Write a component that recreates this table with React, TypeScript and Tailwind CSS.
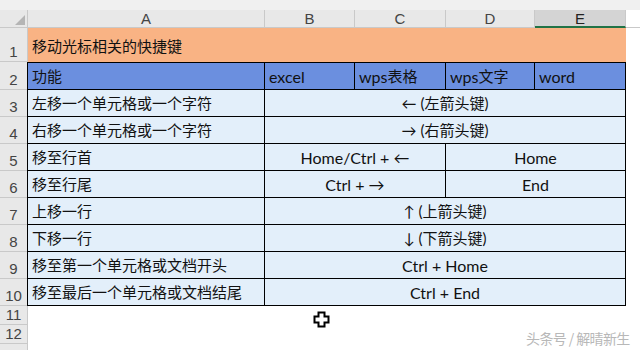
import React from "react";

const CJK = '"Lato", "Noto Sans CJK SC", sans-serif';

function RowHead({ n, h }: { n: number | string; h: string }) {
  return (
    <div
      className={`w-[28px] shrink-0 ${h} bg-[#e8e8e8] border-b border-r border-[#c9c9c9] flex items-end justify-center text-[15px] leading-none text-[#444] pb-[2px]`}
      style={{ fontFamily: '"Liberation Sans", sans-serif' }}
    >
      {n}
    </div>
  );
}

function Cell({
  w,
  children,
  center,
}: {
  w: string;
  children?: React.ReactNode;
  center?: boolean;
}) {
  return (
    <div
      className={`${w} shrink-0 h-full border-r border-b border-black flex items-center pt-[1px] ${
        center ? "justify-center" : "pl-[4px]"
      }`}
    >
      {children}
    </div>
  );
}

const L = ({ children }: { children: React.ReactNode }) => (
  <span className="text-[16px]">{children}</span>
);

type Row = { label: string; full?: React.ReactNode; left?: React.ReactNode; right?: React.ReactNode };

const rows: Row[] = [
  { label: "左移一个单元格或一个字符", full: <span>← (左箭头键)</span> },
  { label: "右移一个单元格或一个字符", full: <span>→ (右箭头键)</span> },
  { label: "移至行首", left: <L>Home/Ctrl + ←</L>, right: <L>Home</L> },
  { label: "移至行尾", left: <L>Ctrl + →</L>, right: <L>End</L> },
  { label: "上移一行", full: <span>↑ (上箭头键)</span> },
  { label: "下移一行", full: <span>↓ (下箭头键)</span> },
  { label: "移至第一个单元格或文档开头", full: <L>Ctrl + Home</L> },
  { label: "移至最后一个单元格或文档结尾", full: <L>Ctrl + End</L> },
];

export default function App() {
  return (
    <div
      className="relative w-[640px] h-[350px] overflow-hidden bg-white text-[15px] text-[#111]"
      style={{ fontFamily: CJK }}
    >
      {/* top strip */}
      <div className="h-[10px] bg-[#f0f0f0]" />
      {/* column header */}
      <div
        className="flex h-[18px] bg-[#e8e8e8] border-b border-[#c9c9c9] text-[15px] leading-none text-[#444]"
        style={{ fontFamily: '"Liberation Sans", sans-serif' }}
      >
        <div className="w-[28px] shrink-0 relative border-r border-[#c9c9c9]">
          <svg width="28" height="18" className="absolute left-0 top-0">
            <polygon points="15,15 25,15 25,5" fill="#b5b5b5" />
          </svg>
        </div>
        <div className="w-[237px] shrink-0 border-r border-[#c9c9c9] flex items-center justify-center">A</div>
        <div className="w-[90px] shrink-0 border-r border-[#c9c9c9] flex items-center justify-center">B</div>
        <div className="w-[91px] shrink-0 border-r border-[#c9c9c9] flex items-center justify-center">C</div>
        <div className="w-[89px] shrink-0 border-r border-[#c9c9c9] flex items-center justify-center">D</div>
        <div className="w-[91px] shrink-0 bg-[#d4d4d4] border-r border-[#c9c9c9] border-b-2 border-b-[#217346] -mb-[1px] flex items-center justify-center text-[#222]">E</div>
        <div className="flex-1 bg-white" />
      </div>

      {/* row 1 */}
      <div className="flex h-[34px]">
        <RowHead n={1} h="h-[34px]" />
        <div className="w-[598px] shrink-0 h-full bg-[#f9b384] flex items-center pl-[4px] pt-[2px]">
          移动光标相关的快捷键
        </div>
      </div>

      {/* row 2 */}
      <div className="flex h-[28px]">
        <RowHead n={2} h="h-[28px]" />
        <div className="flex h-full bg-[#6b8fdf] border-t border-l border-black -ml-[1px]">
          <Cell w="w-[237px]">功能</Cell>
          <Cell w="w-[90px]"><L>excel</L></Cell>
          <Cell w="w-[91px]"><L>wps</L>表格</Cell>
          <Cell w="w-[89px]"><L>wps</L>文字</Cell>
          <Cell w="w-[91px]"><L>word</L></Cell>
        </div>
      </div>

      {/* data rows */}
      {rows.map((r, i) => (
        <div key={i} className="flex h-[27px]">
          <RowHead n={i + 3} h="h-[27px]" />
          <div className="flex h-full bg-[#e3effa] border-l border-black -ml-[1px]">
            <Cell w="w-[237px]">{r.label}</Cell>
            {r.full ? (
              <Cell w="w-[361px]" center>{r.full}</Cell>
            ) : (
              <>
                <Cell w="w-[181px]" center>{r.left}</Cell>
                <Cell w="w-[180px]" center>{r.right}</Cell>
              </>
            )}
          </div>
        </div>
      ))}

      {/* rows 11-13 */}
      <div className="flex h-[19px]">
        <RowHead n={11} h="h-[19px]" />
      </div>
      <div className="flex h-[19px]">
        <RowHead n={12} h="h-[19px]" />
      </div>
      <div className="flex h-[19px]">
        <RowHead n="" h="h-[19px]" />
      </div>

      {/* cursor */}
      <svg width="17" height="17" viewBox="0 0 17 17" className="absolute left-[313px] top-[311px]">
        <path
          d="M5.5 1.5 H11.5 V5.5 H15.5 V11.5 H11.5 V15.5 H5.5 V11.5 H1.5 V5.5 H5.5 Z"
          fill="#fff"
          stroke="#000"
          strokeWidth="2"
        />
      </svg>

      {/* watermark */}
      <div
        className="absolute left-[526px] top-[328px] text-[14px] leading-[20px] tracking-[-0.6px] text-[#b8b8b8] whitespace-nowrap"
        style={{ fontFamily: '"Noto Sans CJK SC", sans-serif' }}
      >
        头条号 / 解晴新生
      </div>
    </div>
  );
}
